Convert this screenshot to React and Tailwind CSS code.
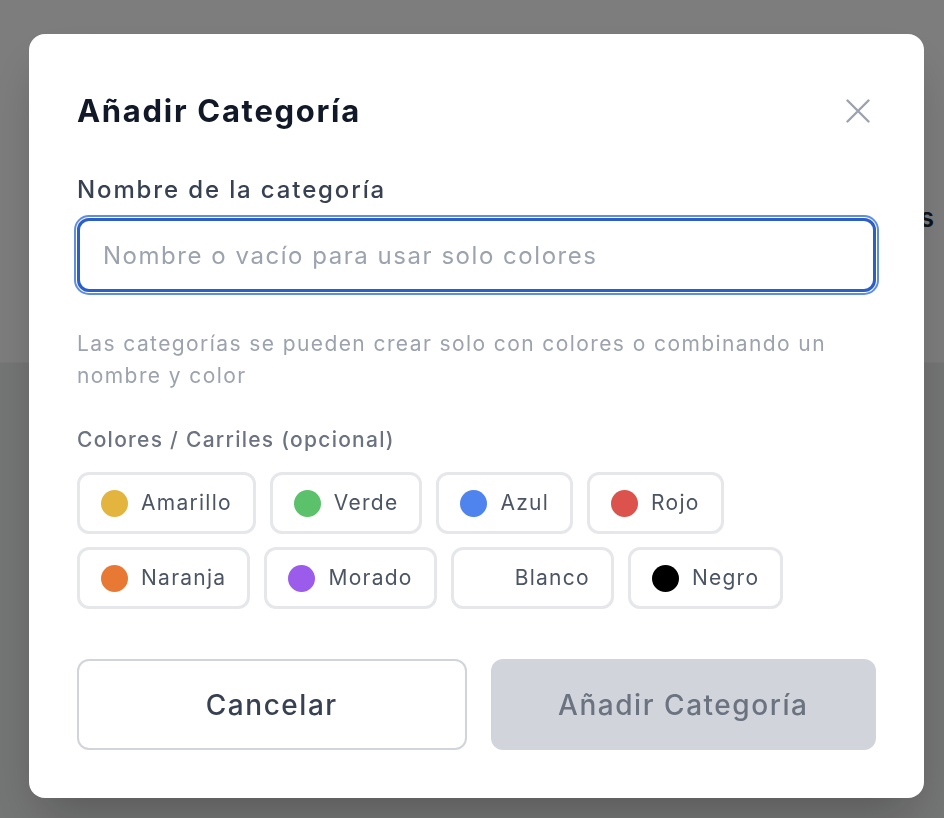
import React from "react"

const colors = [
  [
    { name: "Amarillo", dot: "bg-[#e3b53f]" },
    { name: "Verde", dot: "bg-[#5cc16b]" },
    { name: "Azul", dot: "bg-[#4f83ee]" },
    { name: "Rojo", dot: "bg-[#dc524c]" },
  ],
  [
    { name: "Naranja", dot: "bg-[#e87935]" },
    { name: "Morado", dot: "bg-[#9b5ceb]" },
    { name: "Blanco", dot: "bg-white" },
    { name: "Negro", dot: "bg-black" },
  ],
]

const ColorChip = ({ name, dot }) => (
  <button
    type="button"
    className="flex h-[62px] items-center gap-[13px] rounded-[12px] border-[3px] border-[#e5e7eb] bg-white px-[21px] text-[21px] leading-[30px] tracking-[0.06em] text-[#4b5563]"
  >
    <span className={`h-[27px] w-[27px] rounded-full ${dot}`} />
    {name}
  </button>
)

const App = () => {
  return (
    <div className="relative h-[818px] w-full overflow-hidden font-['Inter',sans-serif]">
      {/* page behind the dialog */}
      <div className="flex h-[363px] items-start justify-end border-b border-[#f2f3f3] bg-[#fafbfb] pr-[10px] pt-[198px]">
        <span className="text-[26px] font-semibold text-[#1f2937]">Categorías</span>
      </div>
      <div className="h-[455px] bg-[#e9eaea]" />

      <div className="fixed inset-0 bg-black/50 pl-[29px] pt-[34px]">
        <div className="flex w-[895px] flex-col rounded-[16px] bg-white px-[48px] pb-[48px] pt-[56px] shadow-2xl">
          <div className="flex items-center justify-between">
            <h2 className="text-[31px] font-bold leading-[42px] tracking-[0.055em] text-[#111827]">Añadir Categoría</h2>
            <button type="button" className="mr-[6px] text-[#9ca3af]">
              <svg width="24" height="24" viewBox="0 0 24 24" fill="none" stroke="currentColor" strokeWidth="2.4" strokeLinecap="round">
                <path d="M1.5 1.5L22.5 22.5M22.5 1.5L1.5 22.5" />
              </svg>
            </button>
          </div>

          <label htmlFor="name" className="mt-[40px] text-[24px] font-medium leading-[36px] tracking-[0.078em] text-[#374151]">
            Nombre de la categoría
          </label>
          <input
            id="name"
            type="text"
            placeholder="Nombre o vacío para usar solo colores"
            className="mt-[10px] h-[74px] w-full rounded-[12px] border-[3px] border-[#2c5fc6] px-[23px] text-[24px] tracking-[0.064em] text-[#111827] shadow-[0_0_0_1px_#ffffff,0_0_0_3px_#5e8de8] outline-none placeholder:text-[#9ca3af]"
          />

          <p className="mt-[36px] text-[21px] leading-[32px] tracking-[0.067em] text-[#9ca3af]">
            Las categorías se pueden crear solo con colores o combinando un nombre y color
          </p>

          <p className="mt-[33px] text-[21px] font-medium leading-[30px] tracking-[0.06em] text-[#6b7280]">
            Colores / Carriles (opcional)
          </p>

          <div className="mt-[17px] flex flex-col gap-[13px]">
            {colors.map((row, i) => (
              <div key={i} className="flex gap-[14px]">
                {row.map(c => (
                  <ColorChip key={c.name} {...c} />
                ))}
              </div>
            ))}
          </div>

          <div className="mt-[50px] flex gap-[24px]">
            <button
              type="button"
              className="h-[91px] flex-1 rounded-[12px] border-2 border-[#d1d5db] bg-white text-[28px] font-medium tracking-[0.055em] text-[#374151]"
            >
              Cancelar
            </button>
            <button
              type="button"
              disabled
              className="h-[91px] flex-1 rounded-[12px] bg-[#d1d5db] text-[28px] font-medium tracking-[0.055em] text-[#6b7280]"
            >
              Añadir Categoría
            </button>
          </div>
        </div>
      </div>
    </div>
  )
}

export default App
